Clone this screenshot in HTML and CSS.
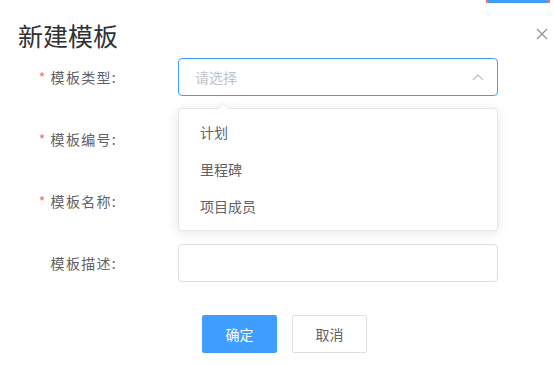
FILE: index.html
```html
<!DOCTYPE html>
<html lang="zh-CN">
<head>
  <meta charset="UTF-8">
  <meta name="viewport" content="width=device-width, initial-scale=1.0">
  <title>新建模板</title>
  <link rel="stylesheet" href="styles.css">
</head>
<body>
<div class="corner-tab"></div>

<div class="dialog">
  <div class="dialog-header">
    <span class="dialog-title">新建模板</span>
    <button class="close-btn" aria-label="关闭">
      <svg width="12" height="12" viewBox="0 0 12 12">
        <path d="M1 1 L11 11 M11 1 L1 11" stroke="#909399" stroke-width="1.3" fill="none"/>
      </svg>
    </button>
  </div>

  <div class="form">
    <div class="form-item">
      <label class="form-label required">模板类型:</label>
      <div class="select is-focus">
        <span class="placeholder">请选择</span>
        <svg class="select-arrow" width="12" height="8" viewBox="0 0 12 8">
          <path d="M1 7 L6 2 L11 7" stroke="#c0c4cc" stroke-width="1.3" fill="none"/>
        </svg>
      </div>

      <div class="dropdown">
        <span class="dropdown-arrow"></span>
        <ul class="dropdown-list">
          <li>计划</li>
          <li>里程碑</li>
          <li>项目成员</li>
        </ul>
      </div>
    </div>

    <div class="form-item">
      <label class="form-label required">模板编号:</label>
      <input class="input" type="text">
    </div>

    <div class="form-item">
      <label class="form-label required">模板名称:</label>
      <input class="input" type="text">
    </div>

    <div class="form-item">
      <label class="form-label">模板描述:</label>
      <input class="input" type="text">
    </div>
  </div>

  <div class="dialog-footer">
    <button class="btn btn-primary">确定</button>
    <button class="btn">取消</button>
  </div>
</div>
</body>
</html>
```

FILE: styles.css
```css
body {
  margin: 0;
  background-color: #fff;
  font-family: "Noto Sans CJK SC", "Liberation Sans", sans-serif;
  color: #606266;
  width: 554px;
  height: 365px;
  overflow: hidden;
  position: relative;
}
.corner-tab {
  position: absolute;
  top: 0;
  left: 486px;
  width: 60px;
  height: 3px;
  background-color: #409eff;
  border-left: 2px solid #f56c6c;
  border-right: 2px solid #f56c6c;
}
.dialog-header {
  display: flex;
  justify-content: space-between;
  align-items: center;
  padding: 18px 6px 0 18px;
  height: 34px;
}
.dialog-title {
  font-size: 25px;
  line-height: 34px;
  color: #303133;
}
.close-btn {
  border: none;
  background: none;
  padding: 0;
  width: 12px;
  height: 12px;
  display: flex;
  margin-top: -3px;
  cursor: pointer;
}
.form {
  margin-top: 6px;
}
.form-item {
  position: relative;
  display: grid;
  grid-template-columns: 117px 320px;
  column-gap: 61px;
  align-items: center;
  height: 38px;
  margin-bottom: 24px;
}
.form-label {
  text-align: right;
  font-size: 14px;
  letter-spacing: 1.3px;
  color: #606266;
}
.form-label.required::before {
  content: "*";
  color: #f56c6c;
  margin-right: 4px;
}
.input,
.select {
  box-sizing: border-box;
  width: 320px;
  height: 38px;
  border: 1px solid #dcdfe6;
  border-radius: 4px;
  background: #fff;
  font-family: inherit;
  font-size: 14px;
  padding: 0 15px;
}
.select {
  display: flex;
  align-items: center;
  justify-content: space-between;
  padding-right: 13px;
}
.select.is-focus {
  border-color: #409eff;
}
.placeholder {
  color: #c0c4cc;
  font-size: 14px;
  margin-left: 1px;
}
.dropdown {
  position: absolute;
  z-index: 2;
  top: 50px;
  left: 178px;
  box-sizing: border-box;
  width: 320px;
  border: 1px solid #e4e7ed;
  border-radius: 4px;
  background: #fff;
  box-shadow: 0 2px 12px rgba(0, 0, 0, 0.1);
}
.dropdown-arrow {
  position: absolute;
  top: -6px;
  left: 38px;
  width: 0;
  height: 0;
  border-left: 6px solid transparent;
  border-right: 6px solid transparent;
  border-bottom: 6px solid #e4e7ed;
}
.dropdown-arrow::after {
  content: "";
  position: absolute;
  top: 1px;
  left: -6px;
  border-left: 6px solid transparent;
  border-right: 6px solid transparent;
  border-bottom: 6px solid #fff;
}
.dropdown-list {
  list-style: none;
  margin: 0;
  padding: 5px 0;
}
.dropdown-list li {
  height: 37px;
  line-height: 37px;
  padding: 0 21px;
  font-size: 14px;
  color: #606266;
}
.dialog-footer {
  display: flex;
  gap: 15px;
  padding-left: 202px;
  margin-top: 33px;
}
.btn {
  box-sizing: border-box;
  width: 75px;
  height: 38px;
  border: 1px solid #dcdfe6;
  border-radius: 2px;
  background: #fff;
  color: #606266;
  font-family: inherit;
  font-size: 14px;
  cursor: pointer;
}
.btn-primary {
  background-color: #409eff;
  border-color: #409eff;
  color: #fff;
}
```
